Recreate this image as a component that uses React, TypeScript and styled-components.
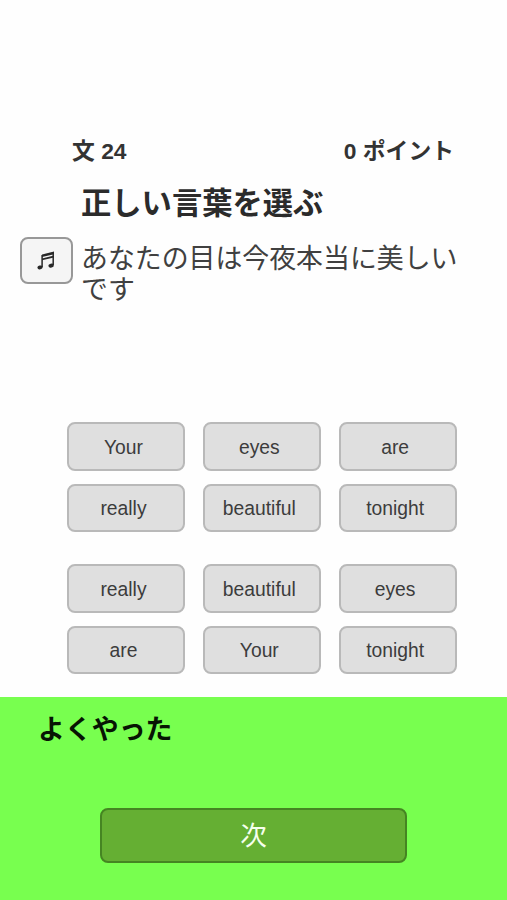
import React from "react";
import styled, { createGlobalStyle } from "styled-components";

const GlobalStyle = createGlobalStyle`
  * { box-sizing: border-box; }
  body {
    margin: 0;
    background: #fefefe;
    color: #333;
    font-family: "Liberation Sans", "Noto Sans CJK JP", sans-serif;
  }
`;

const Screen = styled.main`
  display: flex;
  flex-direction: column;
  width: 507px;
  height: 900px;
  overflow: hidden;
`;

const Exercise = styled.section`
  flex: 0 0 697px;
  min-height: 0;
  height: 697px;
  padding-top: 135px;
`;

const StatusBar = styled.header`
  display: flex;
  justify-content: space-between;
  height: 32px;
  padding: 0 53px 0 72px;
  font-size: 22.8px;
  font-weight: 700;
  line-height: 32px;
  white-space: nowrap;
`;

const Title = styled.h1`
  height: 40px;
  margin: 17px 0 0 81px;
  color: #2b2b2b;
  font-size: 30.3px;
  line-height: 40px;
  white-space: nowrap;
`;

const Prompt = styled.div`
  display: flex;
  gap: 8px;
  height: 185px;
  margin-top: 13px;
  padding-left: 20px;
`;

const SoundButton = styled.button`
  display: flex;
  align-items: center;
  justify-content: center;
  width: 53px;
  height: 47px;
  padding: 0 2px 0 0;
  border: 2px solid #989898;
  border-radius: 8px;
  background: #f5f5f5;
`;

const Sentence = styled.p`
  width: 390px;
  margin: 7px 0 0;
  color: #404040;
  font-size: 26.9px;
  line-height: 31px;
`;

const WordGrid = styled.div`
  display: grid;
  grid-template-columns: repeat(3, 118px);
  grid-auto-rows: 48.5px;
  gap: 13px 17.8px;
  margin-left: 67px;

  & + & {
    margin-top: 32px;
  }
`;

const Word = styled.button`
  padding: 3px 5px 0 0;
  border: 2px solid #b9b9b9;
  border-radius: 8px;
  background: #dfdfdf;
  color: #3c3c3c;
  font: 19.3px "Liberation Sans", sans-serif;
`;

const Feedback = styled.section`
  display: flex;
  flex: 1;
  flex-direction: column;
  align-items: center;
  background: #78ff4f;
`;

const FeedbackText = styled.h2`
  align-self: flex-start;
  height: 36px;
  margin: 15px 0 60px 38px;
  color: #071403;
  font-size: 26.9px;
  line-height: 36px;
`;

const NextButton = styled.button`
  width: 307px;
  height: 55px;
  padding: 0;
  border: 2px solid #458522;
  border-radius: 8px;
  background: #65af33;
  color: #f5ffed;
  font: 26.5px/50px "Liberation Sans", "Noto Sans CJK JP", sans-serif;
`;

const answer = ["Your", "eyes", "are", "really", "beautiful", "tonight"];
const choices = ["really", "beautiful", "eyes", "are", "Your", "tonight"];

function NoteIcon() {
  return (
    <svg width="18" height="20" viewBox="0 0 18 20" fill="#282828" aria-hidden="true">
      <path d="M5 3.4 17 .6v2.7L5 6.1zM5 7.4 17 4.6v1.8L5 9.2z" />
      <path d="M5.1 4v12.2M16.2 2v12.2" fill="none" stroke="#282828" strokeWidth="1.5" />
      <ellipse cx="3" cy="16.4" rx="2.6" ry="1.9" transform="rotate(-15 3 16.4)" />
      <ellipse cx="14.1" cy="14.6" rx="2.7" ry="2" transform="rotate(-15 14.1 14.6)" />
    </svg>
  );
}

export default function App() {
  return (
    <>
      <GlobalStyle />
      <Screen lang="ja">
        <Exercise>
          <StatusBar>
            <span>文 24</span>
            <span>0 ポイント</span>
          </StatusBar>
          <Title>正しい言葉を選ぶ</Title>
          <Prompt>
            <SoundButton aria-label="音声">
              <NoteIcon />
            </SoundButton>
            <Sentence>あなたの目は今夜本当に美しいです</Sentence>
          </Prompt>
          <WordGrid>
            {answer.map((word) => <Word key={word}>{word}</Word>)}
          </WordGrid>
          <WordGrid>
            {choices.map((word) => <Word key={word}>{word}</Word>)}
          </WordGrid>
        </Exercise>
        <Feedback>
          <FeedbackText>よくやった</FeedbackText>
          <NextButton>次</NextButton>
        </Feedback>
      </Screen>
    </>
  );
}
